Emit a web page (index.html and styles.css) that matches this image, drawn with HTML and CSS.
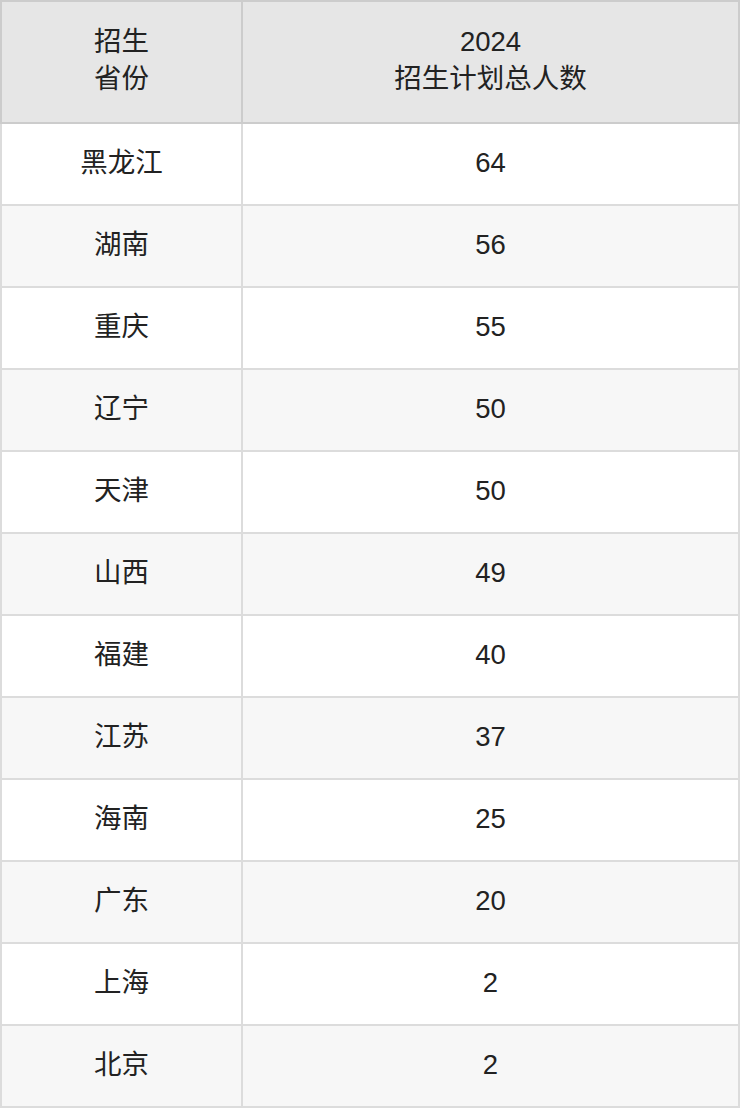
FILE: index.html
```html
<!DOCTYPE html>
<html lang="zh">
<head>
<meta charset="utf-8">
<link rel="stylesheet" href="styles.css">
</head>
<body>
<table class="plan">
  <colgroup><col class="c1"><col class="c2"></colgroup>
  <thead>
    <tr><th>招生<br>省份</th><th>2024<br>招生计划总人数</th></tr>
  </thead>
  <tbody>
    <tr><td>黑龙江</td><td>64</td></tr>
    <tr><td>湖南</td><td>56</td></tr>
    <tr><td>重庆</td><td>55</td></tr>
    <tr><td>辽宁</td><td>50</td></tr>
    <tr><td>天津</td><td>50</td></tr>
    <tr><td>山西</td><td>49</td></tr>
    <tr><td>福建</td><td>40</td></tr>
    <tr><td>江苏</td><td>37</td></tr>
    <tr><td>海南</td><td>25</td></tr>
    <tr><td>广东</td><td>20</td></tr>
    <tr><td>上海</td><td>2</td></tr>
    <tr><td>北京</td><td>2</td></tr>
  </tbody>
</table>
</body>
</html>
```
FILE: styles.css
```css
html, body { margin: 0; padding: 0; background: #fff; }
.plan {
  border-collapse: collapse;
  table-layout: fixed;
  width: 740px;
  font-family: "Liberation Sans", "Noto Sans CJK SC", sans-serif;
  font-size: 27.5px;
  color: #222;
}
.plan .c1 { width: 241px; }
.plan th, .plan td {
  border: 2px solid #dcdcdc;
  text-align: center;
  vertical-align: middle;
}
.plan th {
  background: #e6e6e6;
  border-color: #cccccc;
  font-weight: normal;
  height: 116px;
  padding: 0 0 4px 0;
  line-height: 37px;
}
.plan td { height: 78px; padding: 0 0 2px 0; line-height: 32px; }
.plan tbody tr:nth-child(even) td { background: #f7f7f7; }
```
